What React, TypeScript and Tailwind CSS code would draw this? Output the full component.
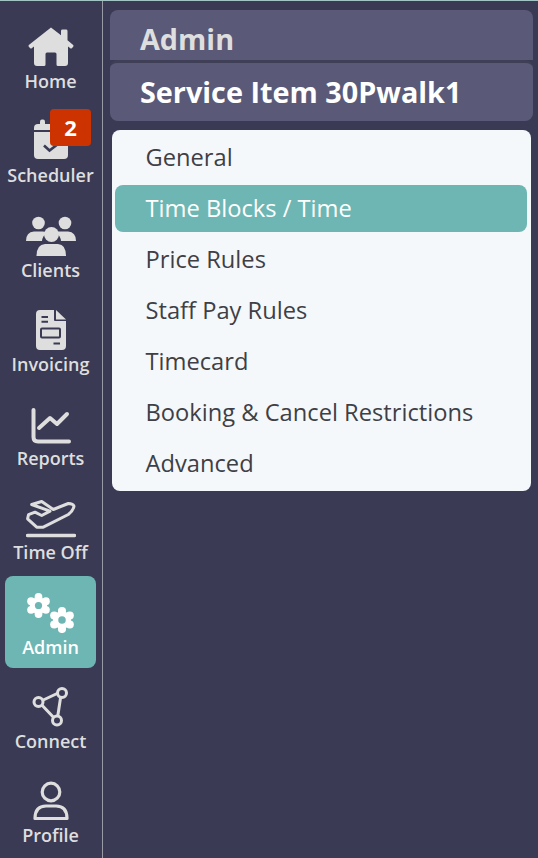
import React from "react";

const C = "#dedede";
const BG = "#3a3a55";

function Home() {
  return (
    <svg width="46" height="40" viewBox="0 0 46 40">
      <path d="M23 0.5 L33 8.2 V4 Q33 2.6 34.5 2.6 H38 Q39.5 2.6 39.5 4 V13.2 L45.2 18 Q46 19 45 20 L44 21 Q43 22 42 21 L40 19.5 V36 Q40 39 37 39 H30 Q28.5 39 28.5 37.5 V27 Q28.5 25.5 27 25.5 H19 Q17.5 25.5 17.5 27 V37.5 Q17.5 39 16 39 H9 Q6 39 6 36 V19.5 L4 21 Q3 22 2 21 L1 20 Q0 19 0.8 18 Z" fill={C} />
    </svg>
  );
}
function Calendar() {
  return (
    <svg width="36" height="42" viewBox="0 0 36 42">
      <rect x="7" y="0.5" width="5" height="8" rx="2" fill={C} />
      <path d="M1 9 Q1 5 5 5 H31 Q35 5 35 9 V11 H1 Z" fill={C} />
      <path d="M1 13 H35 V36 Q35 40 31 40 H5 Q1 40 1 36 Z" fill={C} />
      <path d="M11 26.5 L16.5 31.5 L25 25" fill="none" stroke={BG} strokeWidth="2.6" />
    </svg>
  );
}
function Clients() {
  return (
    <svg width="50" height="42" viewBox="0 0 50 42">
      <g transform="translate(0 2)">
        <circle cx="12.5" cy="7" r="6.3" fill={C} />
        <circle cx="39" cy="7" r="6.3" fill={C} />
        <path d="M0 25 Q0 16 8 15.5 H17 Q19 15.5 20.5 17 Q16.5 20 16 25 Z" fill={C} />
        <path d="M50 25 Q50 16 42 15.5 H33 Q31 15.5 30.5 17 Q34.5 20 35 25 Z" fill={C} />
        <circle cx="25.5" cy="18.5" r="7.5" fill={C} />
        <path d="M10.5 40 Q10.5 28.5 19 28 H32 Q40 28.5 40 40 Z" fill={C} />
      </g>
    </svg>
  );
}
function Invoice() {
  return (
    <svg width="30" height="40" viewBox="0 0 30 40">
      <path d="M4 0 H18 V10 Q18 11 19 11 H30 V36 Q30 40 26 40 H4 Q0 40 0 36 V4 Q0 0 4 0 Z" fill={C} />
      <path d="M20 0 L30 9.5 H20 Z" fill={C} />
      <path d="M5.5 7 H12 M5.5 11.7 H12 M17.5 33.5 H24" stroke={BG} strokeWidth="2" />
      <rect x="5" y="18.5" width="19" height="9" rx="1" fill="none" stroke={BG} strokeWidth="2" />
    </svg>
  );
}
function Reports() {
  return (
    <svg width="40" height="36" viewBox="0 0 40 36">
      <path d="M2.5 2 V29 Q2.5 33.5 7 33.5 H38" fill="none" stroke={C} strokeWidth="4" strokeLinecap="round" />
      <path d="M8 20 L19 10 L26 16 L36 6" fill="none" stroke={C} strokeWidth="4" strokeLinecap="round" strokeLinejoin="round" />
    </svg>
  );
}
function TimeOff() {
  return (
    <svg width="50" height="38" viewBox="0 0 50 38">
      <path d="M5.7 4.5 L15.7 1.5 L27.3 9.5 L42.3 3.5 Q47 3.5 48 6.2 Q47 11 42.3 14.5 L17.3 27.2 H10.7 L1.6 18.8 L2.5 14.7 L9 12.2 L15.7 15.5 L24 11.2 Z" fill="none" stroke={C} strokeWidth="3" strokeLinejoin="round" />
      <path d="M1.5 35.5 H48.5" stroke={C} strokeWidth="3.4" strokeLinecap="round" />
    </svg>
  );
}
function Gear({ cx, cy, r }: { cx: number; cy: number; r: number }) {
  const a = [0, 60, 120, 180, 240, 300];
  return (
    <g>
      <circle cx={cx} cy={cy} r={r} fill="#ffffff" />
      {a.map((d) => (
        <circle
          key={d}
          cx={cx + r * Math.cos(((d + 30) * Math.PI) / 180)}
          cy={cy + r * Math.sin(((d + 30) * Math.PI) / 180)}
          r={r * 0.45}
          fill="#ffffff"
        />
      ))}
      <circle cx={cx} cy={cy} r={r * 0.42} fill="#6eb6b3" />
    </g>
  );
}
function Admin() {
  return (
    <svg width="50" height="40" viewBox="0 0 50 40">
      <Gear cx={12.5} cy={12.5} r={8.6} />
      <Gear cx={36} cy={27} r={9} />
    </svg>
  );
}
function Connect() {
  return (
    <svg width="38" height="40" viewBox="0 0 38 40">
      <path d="M7 15 L29.5 4.5 L25 34 Z" fill="none" stroke={C} strokeWidth="3" />
      <circle cx="6.5" cy="15" r="4.5" fill={BG} stroke={C} strokeWidth="3" />
      <circle cx="30" cy="6" r="4.5" fill={BG} stroke={C} strokeWidth="3" />
      <circle cx="25" cy="33.5" r="4.5" fill={BG} stroke={C} strokeWidth="3" />
    </svg>
  );
}
function Profile() {
  return (
    <svg width="36" height="40" viewBox="0 0 36 40">
      <circle cx="18" cy="11" r="8.8" fill="none" stroke={C} strokeWidth="3.2" />
      <path d="M2 37.5 Q2 25 13 25 H23 Q34 25 34 37.5 Z" fill="none" stroke={C} strokeWidth="3.2" strokeLinejoin="round" />
    </svg>
  );
}

const nav = [
  { label: "Home", icon: <Home />, h: "h-[40px]" },
  { label: "Scheduler", icon: <Calendar />, h: "h-[42px]" },
  { label: "Clients", icon: <Clients />, h: "h-[42px]" },
  { label: "Invoicing", icon: <Invoice />, h: "h-[40px]" },
  { label: "Reports", icon: <Reports />, h: "h-[36px]" },
  { label: "Time Off", icon: <TimeOff />, h: "h-[38px]" },
  { label: "Admin", icon: <Admin />, h: "h-[40px]" },
  { label: "Connect", icon: <Connect />, h: "h-[40px]" },
  { label: "Profile", icon: <Profile />, h: "h-[40px]" },
];

const rows = [
  "General",
  "Time Blocks / Time",
  "Price Rules",
  "Staff Pay Rules",
  "Timecard",
  "Booking & Cancel Restrictions",
  "Advanced",
];

export default function App() {
  return (
    <div className="h-[858px] w-[538px] overflow-hidden bg-[#3a3a55] font-['Open_Sans','Noto_Sans',sans-serif]">
      <div className="h-px bg-[#a3c4c4]" />
      <div className="flex h-[857px]">
        <nav className="flex h-full w-[103px] shrink-0 flex-col gap-[3px] border-r border-[#9a9aa6] pl-[5px] pr-[6px] pt-[9.75px]">
          {nav.map((n) => {
            const active = n.label === "Admin";
            return (
              <div
                key={n.label}
                className={`relative flex h-[91.25px] shrink-0 flex-col items-center justify-end rounded-lg pb-[9px] ${
                  active ? "bg-[#6eb6b3] text-white" : "text-[#dedede]"
                }`}
              >
                <div className={`flex items-end justify-center ${n.h}`}>{n.icon}</div>
                <span className="mt-[2px] text-[18px] font-semibold leading-[24px]">{n.label}</span>
                {n.label === "Scheduler" && (
                  <div className="absolute left-[45px] top-[4px] flex h-[37px] w-[41px] items-center justify-center rounded-[4px] bg-[#cc3300] text-[22px] font-bold text-white">
                    2
                  </div>
                )}
              </div>
            );
          })}
        </nav>
        <main className="flex min-w-0 flex-1 flex-col pl-[7px] pr-[5px] pt-[9px]">
          <div className="flex h-[50px] items-start rounded-t-lg bg-[#5a5a78] pl-[30px] text-[28.8px] font-bold leading-[58px] text-[#dedede]">
            Admin
          </div>
          <div className="flex h-[61px] items-center rounded-lg border-t-[3px] border-[#3f3f58] bg-[#5a5a78] pl-[30px] text-[28.8px] font-bold text-white">
            Service Item 30Pwalk1
          </div>
          <div className="ml-[2px] mr-[2px] mt-[9px] flex h-[361px] flex-col rounded-lg bg-[#f5f8fb] pl-[3px] pr-[4px] pt-[4px]">
            {rows.map((r, i) => (
              <div
                key={r}
                className={`flex h-[47px] shrink-0 items-center rounded-lg pl-[30.5px] text-[23.7px] ${
                  i > 0 ? "mt-[4px]" : ""
                } ${i === 1 ? "bg-[#6eb6b3] text-white" : "text-[#3f3f46]"}`}
              >
                {r}
              </div>
            ))}
          </div>
        </main>
      </div>
    </div>
  );
}
